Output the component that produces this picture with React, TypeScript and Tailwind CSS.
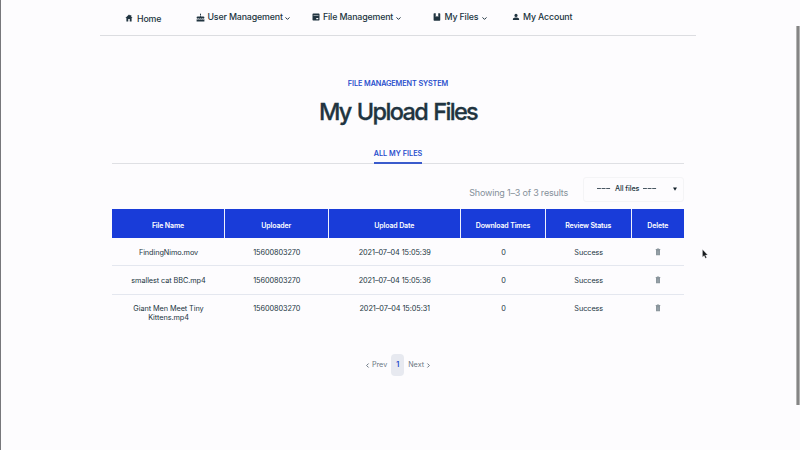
import React from "react";

const HomeIcon = () => (
  <svg className="-mt-[2px]" width="8" height="8" viewBox="0 0 16 16" fill="currentColor">
    <path d="M8 1 0.8 8H2.8V15H6.5V10H9.5V15H13.2V8H15.2L12.5 5.3V2H10.7V3.6Z" />
  </svg>
);

const CakeIcon = () => (
  <svg width="9" height="9" viewBox="0 0 18 18" fill="currentColor">
    <path d="M9 0.5C10.5 2.5 10.4 4.6 9 4.6S7.5 2.5 9 0.5ZM8.2 5H9.8V7H14.5Q16.8 7 16.8 9.3V10.2Q15 12.3 13 10.5Q11 12.5 9 10.5Q7 12.5 5 10.5Q3 12.3 1.2 10.2V9.3Q1.2 7 3.5 7H8.2ZM1.2 12.6Q3.2 13.4 5 12.4Q7 13.8 9 12.4Q11 13.8 13 12.4Q14.8 13.4 16.8 12.6V17H1.2Z" />
  </svg>
);

const ArchiveIcon = () => (
  <svg width="8" height="8" viewBox="0 0 16 16" fill="currentColor" fillRule="evenodd">
    <path d="M2.5 1H13.5Q15 1 15 2.5V13.5Q15 15 13.5 15H2.5Q1 15 1 13.5V2.5Q1 1 2.5 1ZM3 4.2V4.8H13V4.2ZM8.5 10H12.5V12.5H8.5Z" />
  </svg>
);

const BookIcon = () => (
  <svg width="8" height="8" viewBox="0 0 16 16" fill="currentColor">
    <path d="M2.5 0.5H5.5V8L8 6.2L10.5 8V0.5H13.2Q14.5 0.5 14.5 2V14Q14.5 15.5 13.2 15.5H2.5Q1.2 15.5 1.2 14V2Q1.2 0.5 2.5 0.5Z" />
  </svg>
);

const PersonIcon = () => (
  <svg width="8" height="8" viewBox="0 0 16 16" fill="currentColor">
    <circle cx="8" cy="4.8" r="3.1" />
    <path d="M1.8 13.8V12.2C1.8 10.2 5 9.2 8 9.2S14.2 10.2 14.2 12.2V13.8Z" />
  </svg>
);

const Chevron = ({ className }: { className: string }) => (
  <svg className={className} viewBox="0 0 10 10" fill="none" stroke="currentColor" strokeWidth="2">
    <path d="M1 2.8 5 6.8 9 2.8" />
  </svg>
);

const Trash = () => (
  <svg width="6" height="8" viewBox="0 0 12 16" fill="#8a959c">
    <path d="M3.8 1H8.2V2.2H10.5V4H1.5V2.2H3.8ZM2 4H10V14.6H2Z" />
    <path d="M4.6 6.5V13M7.4 6.5V13" stroke="#a5aeb5" strokeWidth="1" />
  </svg>
);

const nav = [
  { label: "Home", icon: <HomeIcon />, box: "w-[71px] pt-[3px]", gap: "gap-[4px]", menu: false },
  { label: "User Management", icon: <CakeIcon />, box: "w-[116px]", gap: "gap-[2.5px]", menu: true },
  { label: "File Management", icon: <ArchiveIcon />, box: "w-[121px]", gap: "gap-[3px]", menu: true },
  { label: "My Files", icon: <BookIcon />, box: "w-[79px]", gap: "gap-[3.5px]", menu: true },
  { label: "My Account", icon: <PersonIcon />, box: "w-[80px]", gap: "gap-[3px]", menu: false },
];

const columns = ["File Name", "Uploader", "Upload Date", "Download Times", "Review Status", "Delete"];

const rows = [
  { name: "FindingNimo.mov", date: "2021–07–04 15:05:39", pad: "pt-[10px]" },
  { name: "smallest cat BBC.mp4", date: "2021–07–04 15:05:36", pad: "pt-[10px]" },
  { name: "Giant Men Meet Tiny Kittens.mp4", date: "2021–07–04 15:05:31", pad: "pt-[9px] pb-[1px]" },
];

const grid = "grid grid-cols-[113px_103.5px_132.5px_85px_85.5px_52.5px]";

const Dashes = () => (
  <svg width="14" height="2" viewBox="0 0 14 2" stroke="#4a5863" strokeWidth="1">
    <path d="M0 0.5H3.9M4.6 0.5H8.5M9.2 0.5H13.1" />
  </svg>
);

export default function App() {
  return (
    <div className="relative h-[450px] w-[800px] overflow-hidden border-l border-[#77777b] bg-[#fdfcfe] font-['Inter',sans-serif] text-[#213440]">
      <nav className="ml-[99px] flex h-[36px] w-[596px] border-b border-[#dcdde1] pl-[25px]">
        {nav.map((item) => (
          <div key={item.label} className={`flex h-[34px] shrink-0 items-center ${item.gap} ${item.box}`}>
            {item.icon}
            <span className="text-[8.8px] font-medium leading-[12px] tracking-[-0.14px] whitespace-nowrap">{item.label}</span>
            {item.menu && <Chevron className="mt-[3px] h-[5px] w-[5px]" />}
          </div>
        ))}
      </nav>

      <main className="ml-[111px] w-[572px]">
        <header className="flex flex-col items-center pt-[43px]">
          <p className="text-[7.3px] font-medium leading-[10px] tracking-[-0.1px] text-[#2148cc] [-webkit-text-stroke:0.1px_#2148cc]">
            FILE MANAGEMENT SYSTEM
          </p>
          <h1 className="mt-[7px] text-[23.5px] font-medium leading-[32px] tracking-[-1.65px] [word-spacing:1.5px] [-webkit-text-stroke:0.3px_#213440]">
            My Upload Files
          </h1>
        </header>

        <div className="mt-[20px] flex h-[16px] justify-center border-b border-[#dfe0e4]">
          <span className="h-[16px] border-b-2 border-[#3a5bcc] text-[7.3px] font-medium leading-[11px] text-[#2148cc] [-webkit-text-stroke:0.1px_#2148cc]">
            ALL MY FILES
          </span>
        </div>

        <div className="mt-[13px] flex h-[25px] justify-end">
          <span className="mt-[10px] mr-[15px] text-[9px] leading-[12px] tracking-[-0.19px] text-[#85909a]">Showing 1–3 of 3 results</span>
          <div className="flex w-[101px] items-center gap-[4px] rounded-[3px] border border-[#f4f4f6] pb-px pl-[13px] text-[7.2px] font-medium">
            <Dashes />
            <span className="pt-px tracking-[-0.08px] whitespace-nowrap">All files</span>
            <Dashes />
            <svg className="ml-auto mr-[6px]" width="4" height="4" viewBox="0 0 4 4">
              <path d="M0 0.5H4L2 3.8Z" fill="#111f29" />
            </svg>
          </div>
        </div>

        <section className="mt-[7px]">
          <div className={`${grid} h-[28.5px] bg-[#193cd9] text-[7px] font-semibold tracking-[-0.14px] text-white`}>
            {columns.map((c) => (
              <div key={c} className="flex items-center justify-center border-r border-[#eef1fc] pt-[5px] last:border-r-0">
                {c}
              </div>
            ))}
          </div>
          {rows.map((r) => (
            <div
              key={r.name}
              className={`${grid} min-h-[28.5px] border-b border-[#e4e7ef] ${r.pad} text-center text-[7.3px] leading-[9px] tracking-[-0.07px] last:border-b-0`}
            >
              <div className="px-[18px]">{r.name}</div>
              <div>15600803270</div>
              <div>{r.date}</div>
              <div>0</div>
              <div>Success</div>
              <div className="flex justify-center">
                <Trash />
              </div>
            </div>
          ))}
        </section>

        <div className="mt-[31px] flex h-[22px] items-center justify-center text-[7.2px] text-[#6b7783]">
          <Chevron className="mr-[2px] h-[5px] w-[5px] rotate-90" />
          <span>Prev</span>
          <span className="mx-[4px] flex h-[22px] w-[13px] items-center justify-center rounded-[4px] bg-[#e7e9f0] font-semibold text-[#2148cc]">1</span>
          <span>Next</span>
          <Chevron className="ml-[2px] h-[5px] w-[5px] -rotate-90" />
        </div>
      </main>

      <div className="absolute top-[26px] right-0 h-[379px] w-[4px] border-x border-[#b4b4b4] bg-[#858585]" />
      <svg className="absolute top-[249px] left-[701px]" width="6" height="10" viewBox="0 0 6 10">
        <path d="M0.5 0.5V8L2.2 6.5L3.4 9.3L4.6 8.8L3.4 6.1H5.6Z" fill="#16191c" stroke="#d8d8da" strokeWidth="0.3" />
      </svg>
    </div>
  );
}
